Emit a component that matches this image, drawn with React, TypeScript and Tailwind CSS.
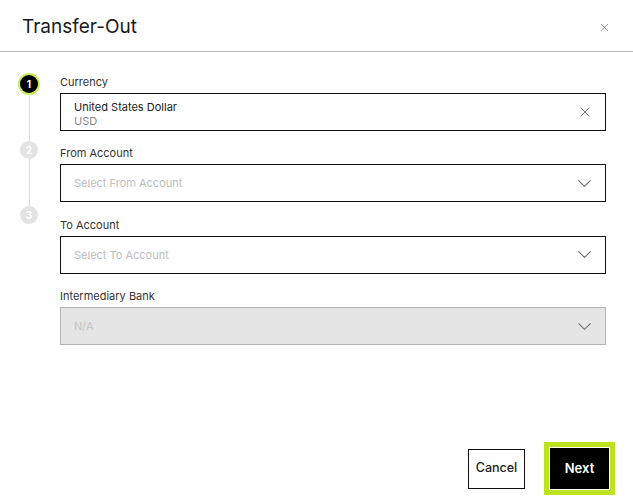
import { X, ChevronDown } from 'lucide-react';

const fields = [
  { label: 'From Account', placeholder: 'Select From Account' },
  { label: 'To Account', placeholder: 'Select To Account' },
];

function StepDot({ n, active }: { n: number; active?: boolean }) {
  return active ? (
    <div className="flex size-[18px] items-center justify-center rounded-full bg-black text-[10px] font-bold text-white ring-2 ring-[#c6ec5a]">
      {n}
    </div>
  ) : (
    <div className="flex size-[18px] items-center justify-center rounded-full bg-[#e3e3e3] text-[10px] font-bold text-white">
      {n}
    </div>
  );
}

export default function App() {
  return (
    <div className="flex h-[502px] w-[633px] flex-col bg-white font-['Inter',sans-serif] text-[#222]">
      {/* Header */}
      <div className="flex h-[52px] shrink-0 items-center justify-between border-b border-[#bdbdbd] pl-[22px] pr-[22px] pt-[4px]">
        <h1 className="text-[19px] font-normal text-[#1a1a1a]">Transfer-Out</h1>
        <X className="size-[13px] text-[#666]" strokeWidth={1.3} />
      </div>

      {/* Body */}
      <div className="flex flex-1 pt-[23px]">
        {/* Steps */}
        <div className="flex w-[60px] shrink-0 flex-col items-center pr-[2px]">
          <StepDot n={1} active />
          <div className="h-[48px] w-px bg-[#dedede]" />
          <StepDot n={2} />
          <div className="h-[47px] w-px bg-[#dedede]" />
          <StepDot n={3} />
        </div>

        {/* Form */}
        <div className="flex w-[546px] flex-col gap-[15.4px] text-[11px]">
          <div>
            <div className="mb-[4px] h-[14px] leading-[14px] text-[#333]">Currency</div>
            <div className="flex h-[38px] items-center justify-between border border-[#111] pl-[13px] pr-[12px]">
              <div className="pt-[3px] leading-[14px]">
                <div className="text-[#222]">United States Dollar</div>
                <div className="text-[#888]">USD</div>
              </div>
              <X className="size-[16px] text-[#666]" strokeWidth={1.4} />
            </div>
          </div>

          {fields.map(f => (
            <div key={f.label}>
              <div className="mb-[4px] h-[14px] leading-[14px] text-[#333]">{f.label}</div>
              <div className="flex h-[38px] items-center justify-between border border-[#111] pl-[13px] pr-[9px]">
                <span className="text-[#bdbdbd]">{f.placeholder}</span>
                <ChevronDown className="size-[23px] text-[#6f6f6f]" strokeWidth={1.2} />
              </div>
            </div>
          ))}

          <div>
            <div className="mb-[4px] h-[14px] leading-[14px] text-[#333]">Intermediary Bank</div>
            <div className="flex h-[38px] items-center justify-between border border-[#b3b3b3] bg-[#e5e5e5] pl-[13px] pr-[9px]">
              <span className="text-[#c4c4c4]">N/A</span>
              <ChevronDown className="size-[23px] text-[#777]" strokeWidth={1.2} />
            </div>
          </div>
        </div>
      </div>

      {/* Footer */}
      <div className="flex shrink-0 items-center justify-end gap-[25px] pb-[13px] pr-[24px]">
        <button
          type="button"
          className="h-[40px] w-[57px] border border-[#111] bg-white text-[12.5px] font-medium text-[#222]"
        >
          Cancel
        </button>
        <button
          type="button"
          className="h-[41px] w-[59px] bg-black text-[13px] font-semibold text-white ring-[5px] ring-[#bde320] ring-offset-1 ring-offset-white"
        >
          Next
        </button>
      </div>
    </div>
  );
}
